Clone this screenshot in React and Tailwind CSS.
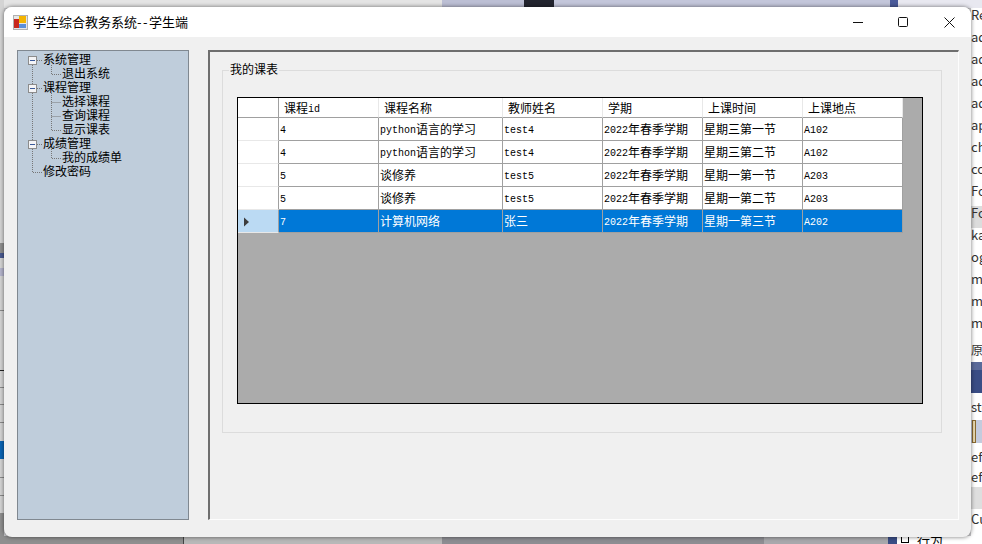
import React from 'react';

const columns = [
  { title: '课程id', width: 'w-[100px]' },
  { title: '课程名称', width: 'w-[124px]' },
  { title: '教师姓名', width: 'w-[100px]' },
  { title: '学期', width: 'w-[100px]' },
  { title: '上课时间', width: 'w-[100px]' },
  { title: '上课地点', width: 'w-[100px]' },
];

const rows = [
  ['4', 'python语言的学习', 'test4', '2022年春季学期', '星期三第一节', 'A102'],
  ['4', 'python语言的学习', 'test4', '2022年春季学期', '星期三第二节', 'A102'],
  ['5', '谈修养', 'test5', '2022年春季学期', '星期一第一节', 'A203'],
  ['5', '谈修养', 'test5', '2022年春季学期', '星期一第二节', 'A203'],
  ['7', '计算机网络', '张三', '2022年春季学期', '星期一第三节', 'A202'],
];

const tree = [
  { label: '系统管理', level: 0 },
  { label: '退出系统', level: 1 },
  { label: '课程管理', level: 0 },
  { label: '选择课程', level: 1 },
  { label: '查询课程', level: 1 },
  { label: '显示课表', level: 1 },
  { label: '成绩管理', level: 0 },
  { label: '我的成绩单', level: 1 },
  { label: '修改密码', level: 0 },
];

const sideText = ['Re', 'ad', 'ad', 'ad', 'ad', 'ap', 'ch', 'co', 'Fo', 'Fo', 'ka', 'og', 'me', 'me', 'me'];

// latin text in the grid is a 6px-wide bitmap look, cjk stays 12px
const Mixed = ({ text }) => {
  const parts = text.match(/[\x00-\x7f]+|[^\x00-\x7f]+/g) || [];
  return parts.map((part, i) =>
    /^[\x00-\x7f]/.test(part) ? (
      <span key={i} className="font-['Liberation_Mono',monospace] text-[10px] leading-[10px] align-[1px]">{part}</span>
    ) : (
      <span key={i}>{part}</span>
    )
  );
};

const Expander = ({ y }) => (
  <g>
    <rect x="27.5" y={y - 4.5} width="8" height="8" fill="#f4f4f6" stroke="#8c8c8c" />
    <line x1="29" x2="34" y1={y - 0.5} y2={y - 0.5} stroke="#3a5a9a" />
  </g>
);

const TreeLines = () => (
  <svg className="absolute left-0 top-0 pointer-events-none" width="172" height="140" viewBox="17 50 172 140">
    <g stroke="#777" strokeDasharray="1 1" fill="none">
      <path d="M31.5 64V171.5H41" />
      <path d="M36 59.5H41M36 87.5H41M36 143.5H41" />
      <path d="M50.5 64V73.5H60" />
      <path d="M50.5 92V129.5H60M50.5 101.5H60M50.5 115.5H60" />
      <path d="M50.5 148V157.5H60" />
    </g>
    <Expander y={60} />
    <Expander y={88} />
    <Expander y={144} />
  </svg>
);

const Sidebar = () => (
  <div className="relative w-[172px] shrink-0 border border-[#808890] bg-[#bfcddb] pt-[1px]">
    <TreeLines />
    {tree.map((item) => (
      <div
        key={item.label}
        className={`h-[14px] leading-[14px] text-[12px] text-black whitespace-nowrap ${item.level === 0 ? 'pl-[25px]' : 'pl-[44px]'}`}
      >
        {item.label}
      </div>
    ))}
  </div>
);

const CourseGrid = () => (
  <div className="mt-[26px] ml-[14px] h-[307px] w-[686px] border border-black bg-[#ababab]">
    <div className="flex h-[20px] w-[665px]">
      <div className="w-[41px] shrink-0 border-b border-r border-[#a0a0a0] bg-white" />
      {columns.map((col) => (
        <div
          key={col.title}
          className={`${col.width} shrink-0 border-b border-r border-b-[#a0a0a0] border-r-[#e8e8e8] bg-white pl-[5px] text-[12px] leading-[19px] text-black`}
        >
          <Mixed text={col.title} />
        </div>
      ))}
    </div>
    {rows.map((row, i) => {
      const selected = i === rows.length - 1;
      return (
        <div key={i} className="flex h-[23px] w-[665px]">
          <div className={`relative w-[41px] shrink-0 border-b border-r border-b-[#e8e8e8] border-r-[#a0a0a0] ${selected ? 'bg-[#bbdaf3]' : 'bg-white'}`}>
            {selected && (
              <svg className="absolute left-[5px] top-[7px]" width="8" height="10" viewBox="0 0 8 10">
                <path d="M1 0.5L6 5L1 9.5Z" fill="#3c3c3c" />
              </svg>
            )}
          </div>
          {row.map((cell, j) => (
            <div
              key={j}
              className={`${columns[j].width} shrink-0 border-b border-r border-[#a0a0a0] pl-[1px] text-[12px] leading-[21px] whitespace-nowrap ${selected ? 'bg-[#0078d7] text-white' : 'bg-white text-black'}`}
            >
              <Mixed text={cell} />
            </div>
          ))}
        </div>
      );
    })}
  </div>
);

const CoursePanel = () => (
  <div className="ml-[19px] w-[751px] border-l-2 border-t-2 border-l-[#6e6e6e] border-t-[#6e6e6e] border-r border-b border-r-[#fdfdfd] border-b-[#fdfdfd]">
    <div className="relative ml-[12px] mt-[18px] h-[363px] w-[720px] border border-[#dcdcdc]">
      <span className="absolute -top-[10px] left-[6px] bg-[#f0f0f0] px-[1px] text-[12px] leading-[16px] text-black">我的课表</span>
      <CourseGrid />
    </div>
  </div>
);

// the other programs visible around the window
const Desktop = () => (
  <>
    <div className="absolute left-0 top-0 flex h-[8px] w-full">
      <div className="w-[442px] bg-[#e4e4e4]" />
      <div className="w-[82px] bg-[#bcbfd4]" />
      <div className="w-[30px] bg-[#23252f]" />
      <div className="w-[336px] bg-[#c3c6da]" />
      <div className="w-[8px] bg-[#4a5a9a]" />
      <div className="flex-1 bg-[#e8e8f0]" />
    </div>
    <div className="absolute left-0 top-0 flex h-full w-[4px] flex-col bg-[#d4d4d4]">
      <div className="mt-[243px] h-[10px] bg-[#8f8f8f]" />
      <div className="h-[5px] bg-[#4a5a90]" />
      <div className="mt-[10px] h-[8px] bg-[#b4b4cc]" />
      <div className="mt-[34px] h-[1px] bg-[#8a8a8a]" />
      <div className="mt-[59px] h-[1px] bg-[#222]" />
      <div className="mt-[16px] h-[1px] bg-[#8a8a8a]" />
      <div className="mt-[16px] h-[1px] bg-[#8a8a8a]" />
      <div className="mt-[17px] h-[1px] bg-[#8a8a8a]" />
      <div className="mt-[18px] h-[18px] bg-[#0a64b4]" />
      <div className="mt-[18px] h-[1px] bg-[#8a8a8a]" />
      <div className="mt-[17px] h-[1px] bg-[#8a8a8a]" />
      <div className="mt-[17px] flex-1 bg-[#8f8f8f]" />
    </div>
    <div className="absolute bottom-0 left-0 flex h-[8px] w-full">
      <div className="w-[183px] bg-[#8f8f8f]" />
      <div className="w-[259px] border-l border-[#444] bg-[#b8b8b8]" />
      <div className="w-[322px] bg-[#8d8d92]" />
      <div className="w-[124px] bg-[#a8a8ac]" />
      <div className="w-[9px] bg-[#3a4d85]" />
      <div className="flex flex-1 items-center gap-[8px] bg-white pl-[4px] text-[13px] leading-[8px] text-black">
        <span className="h-[6px] w-[8px] border border-t-0 border-black" />
        <span>行为</span>
      </div>
    </div>
    <div className="absolute right-0 top-[8px] flex h-[529px] w-[11px] flex-col overflow-hidden bg-white text-[13px] text-[#333]">
      {sideText.map((t, i) => (
        <div key={i} className={`h-[22px] shrink-0 whitespace-nowrap leading-[14px] ${i === 9 ? 'bg-[#dcdcdc]' : ''}`}>{t}</div>
      ))}
      <div className="mt-[2px] h-[22px] shrink-0 whitespace-nowrap text-[12px] leading-[20px]">原</div>
      <div className="h-[8px] shrink-0 bg-[#5a6a9a]" />
      <div className="h-[23px] shrink-0 bg-[#3a4d85]" />
      <div className="h-[27px] shrink-0 whitespace-nowrap pt-[4px] leading-[20px]">ste</div>
      <div className="h-[23px] shrink-0 bg-[#c4cbdd] pl-[1px]">
        <div className="h-full w-[4px] border border-[#8a6a30] bg-[#e8d8b0]" />
      </div>
      <div className="mt-[4px] h-[20px] shrink-0 whitespace-nowrap leading-[20px]">ef</div>
      <div className="h-[20px] shrink-0 whitespace-nowrap leading-[20px]">ef</div>
      <div className="h-[22px] shrink-0 bg-[#dedede]" />
      <div className="h-[20px] shrink-0 whitespace-nowrap leading-[20px]">Cu</div>
    </div>
  </>
);

export default function App() {
  return (
    <div className="relative h-[544px] w-[982px] overflow-hidden bg-[#c9c9cc] font-['Noto_Sans_CJK_SC','Liberation_Sans',sans-serif]">
      <Desktop />

      {/* window */}
      <div className="absolute left-[4px] top-[7px] flex h-[530px] w-[967px] flex-col overflow-hidden rounded-[8px] bg-[#f0f0f0] shadow-[0_0_4px_rgba(0,0,0,0.55)]">
        <div className="flex h-[30px] shrink-0 items-center bg-white">
          <svg className="ml-[9px] mr-[5px]" width="15" height="15" viewBox="0 0 15 15">
            <rect x="0.5" y="0.5" width="14" height="14" fill="#e6e6e6" stroke="#b0b0b0" />
            <rect x="1" y="4" width="5" height="9" fill="#c8281e" />
            <rect x="6" y="1" width="7" height="7" fill="#f4b400" />
            <rect x="6" y="9" width="7" height="4" fill="#5b8fd9" />
          </svg>
          <span className="text-[13px] leading-[16px] text-black">学生综合教务系统<span className="tracking-[1.5px]">--</span>学生端</span>
          <div className="ml-auto flex h-full items-center">
            <svg className="mr-[35px]" width="10" height="10" viewBox="0 0 10 10"><path d="M0 5.5H10" stroke="#111" /></svg>
            <svg className="mr-[36px]" width="10" height="10" viewBox="0 0 10 10"><rect x="0.5" y="0.5" width="9" height="9" rx="1" fill="none" stroke="#111" /></svg>
            <svg className="mr-[16px]" width="11" height="11" viewBox="0 0 11 11"><path d="M0.5 0.5L10.5 10.5M10.5 0.5L0.5 10.5" stroke="#111" /></svg>
          </div>
        </div>
        <div className="flex h-[470px] mt-[13px] pl-[13px]">
          <Sidebar />
          <CoursePanel />
        </div>
      </div>
    </div>
  );
}
